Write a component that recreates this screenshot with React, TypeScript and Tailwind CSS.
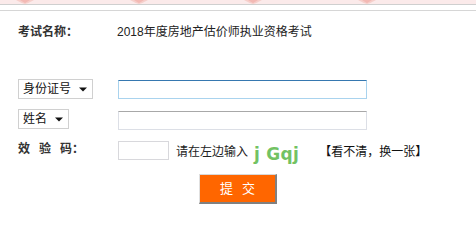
import React from "react";

function Arrow() {
  return (
    <svg width="8" height="5" viewBox="0 0 8 5" className="block">
      <path d="M0 0.5 L8 0.5 L4 4.5 Z" fill="#111" />
    </svg>
  );
}

function Deco() {
  const xs = [25, 139, 253, 367];
  return (
    <svg width="476" height="4" viewBox="0 0 476 4" className="block">
      {xs.map((x) => (
        <g key={x}>
          <path d={`M${x - 9} 0 Q${x - 4} 3 ${x} 4 Q${x + 4} 3 ${x + 9} 0 Z`} fill="#f6cfcb" />
          <path d={`M${x - 5} 0 Q${x - 2} 2 ${x} 3 Q${x + 2} 2 ${x + 5} 0 Z`} fill="#f3b9b4" />
        </g>
      ))}
    </svg>
  );
}

export default function App() {
  return (
    <div
      className="w-[476px] h-[208px] bg-white overflow-hidden text-[12px] leading-none text-[#333]"
      style={{ fontFamily: '"Liberation Sans", "Noto Sans CJK SC", sans-serif' }}
    >
      <div className="h-[4px] bg-[#fbeaea]">
        <Deco />
      </div>
      <div className="h-px bg-[#cfcfcf]" />
      <div className="h-[5px]" />
      <div className="h-px bg-[#d6d6d6]" />

      <div className="mt-[11px] h-[20px] pl-[18px] flex items-center">
        <div className="w-[99px] font-bold text-[#333]">考试名称：</div>
        <div className="text-[#222]">2018年度房地产估价师执业资格考试</div>
      </div>

      <div className="mt-[37px] h-[20px] pl-[18px] flex items-center">
        <div className="w-[75px] h-[20px] border border-[#d0d0d0] flex items-center justify-between pl-[4px] pr-[5px] text-[#111]">
          <span>身份证号</span>
          <Arrow />
        </div>
        <div className="ml-[25px] w-[249px] h-[19px] border border-[#a9d3ee] border-t-[#3678b0]" />
      </div>

      <div className="mt-[10px] h-[20px] pl-[18px] flex items-center">
        <div className="w-[51px] h-[20px] border border-[#d0d0d0] flex items-center justify-between pl-[4px] pr-[5px] text-[#111]">
          <span>姓名</span>
          <Arrow />
        </div>
        <div className="ml-[49px] mt-[2px] w-[249px] h-[19px] border border-[#dcdfe6] border-t-[#a8a8a8]" />
      </div>

      <div className="mt-[12px] h-[19px] pl-[18px] flex items-center">
        <div className="w-[100px] font-bold text-[#333] flex -mt-[4px]">
          <span className="mr-[9px]">效</span>
          <span className="mr-[9px]">验</span>
          <span>码：</span>
        </div>
        <div className="w-[51px] h-[19px] border border-[#d8d8dc]" />
        <div className="ml-[7px] mt-[3px] text-[#222]">请在左边输入</div>
        <div
          className="ml-[6px] mt-[7px] text-[17px] font-bold text-[#72c263] tracking-[0.3px]"
          style={{ fontFamily: '"DejaVu Sans", sans-serif' }}
        >
          j&nbsp;Gqj
        </div>
        <div className="ml-[20px] mt-[3px] text-[#111]">【看不清，换一张】</div>
      </div>

      <div className="mt-[14px] ml-[199px] w-[78px] h-[30px] bg-[#ff6600] border-t border-l border-t-[#d8d8d8] border-l-[#e0e0e0] border-r-2 border-b-2 border-r-[#808080] border-b-[#808080] flex items-center justify-center text-white text-[13px]">
        <span className="mr-[9px]">提</span>
        <span>交</span>
      </div>
    </div>
  );
}
